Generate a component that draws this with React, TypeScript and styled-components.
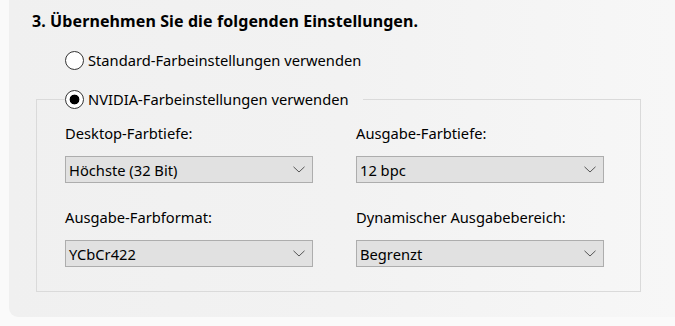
import React from "react";
import styled, { createGlobalStyle } from "styled-components";

const Global = createGlobalStyle`
  html, body { margin: 0; padding: 0; }
  body {
    background: #fafafa;
    font-family: "Noto Sans", "Open Sans", sans-serif;
    color: #000;
    overflow: hidden;
  }
`;

const Page = styled.div`
  width: 675px;
  height: 326px;
  padding-left: 9px;
  box-sizing: border-box;
`;

const Panel = styled.div`
  height: 317px;
  box-sizing: border-box;
  background: linear-gradient(90deg, #f0f0f0 0%, #f2f2f2 50%, #f7f7f7 100%);
  border-bottom-left-radius: 9px;
  padding: 11px 0 0 23px;
`;

const Heading = styled.h3`
  margin: 0;
  font-size: 16px;
  line-height: 20px;
  font-weight: 700;
  letter-spacing: 0.1px;
  white-space: nowrap;
`;

const RadioRow = styled.label`
  display: flex;
  align-items: center;
  gap: 4px;
  height: 19px;
  font-size: 14.7px;
  line-height: 19px;
  white-space: nowrap;
`;

const FirstRadio = styled(RadioRow)`
  margin: 20px 0 0 33px;
`;

const Radio = styled.input.attrs({ type: "radio" })`
  appearance: none;
  -webkit-appearance: none;
  margin: 0;
  width: 19px;
  height: 19px;
  box-sizing: border-box;
  border: 1.3px solid #333;
  border-radius: 50%;
  background: #fff;
  flex: none;
  &:checked {
    background: radial-gradient(circle, #000 0 4.6px, #fff 5.2px);
  }
`;

const Group = styled.fieldset`
  margin: 20px 0 0 4px;
  width: 605px;
  box-sizing: border-box;
  border: 1px solid #dadada;
  padding: 14px 36px 24px 28px;
  min-inline-size: 0;
`;

const Legend = styled.legend`
  padding: 0 14px 0 0;
  margin: 0;
`;

const Grid = styled.div`
  display: grid;
  grid-template-columns: 248px 248px;
  column-gap: 43px;
  row-gap: 24px;
`;

const Field = styled.div`
  display: flex;
  flex-direction: column;
  gap: 13px;
`;

const Label = styled.div`
  font-size: 14.7px;
  line-height: 20px;
  white-space: nowrap;
`;

const Combo = styled.div`
  height: 27px;
  box-sizing: border-box;
  border: 1px solid #adadad;
  background: #e1e1e1;
  display: flex;
  align-items: center;
  justify-content: space-between;
  padding: 0 6px 0 3px;
  font-size: 14.7px;
  line-height: 20px;
  white-space: nowrap;
`;

const Chevron = () => (
  <svg width="12" height="7" viewBox="0 0 12 7" style={{ marginRight: 1 }}>
    <path d="M0.5 0.8 L6 6 L11.5 0.8" fill="none" stroke="#555" strokeWidth="1" />
  </svg>
);

const fields = [
  { label: "Desktop-Farbtiefe:", value: "Höchste (32 Bit)" },
  { label: "Ausgabe-Farbtiefe:", value: "12 bpc" },
  { label: "Ausgabe-Farbformat:", value: "YCbCr422" },
  { label: "Dynamischer Ausgabebereich:", value: "Begrenzt" },
];

export default function App() {
  return (
    <Page>
      <Global />
      <Panel>
        <Heading>3. Übernehmen Sie die folgenden Einstellungen.</Heading>
        <FirstRadio>
          <Radio name="farbe" />
          Standard-Farbeinstellungen verwenden
        </FirstRadio>
        <Group>
          <Legend>
            <RadioRow>
              <Radio name="farbe" defaultChecked />
              NVIDIA-Farbeinstellungen verwenden
            </RadioRow>
          </Legend>
          <Grid>
            {fields.map((f) => (
              <Field key={f.label}>
                <Label>{f.label}</Label>
                <Combo>
                  <span>{f.value}</span>
                  <Chevron />
                </Combo>
              </Field>
            ))}
          </Grid>
        </Group>
      </Panel>
    </Page>
  );
}
